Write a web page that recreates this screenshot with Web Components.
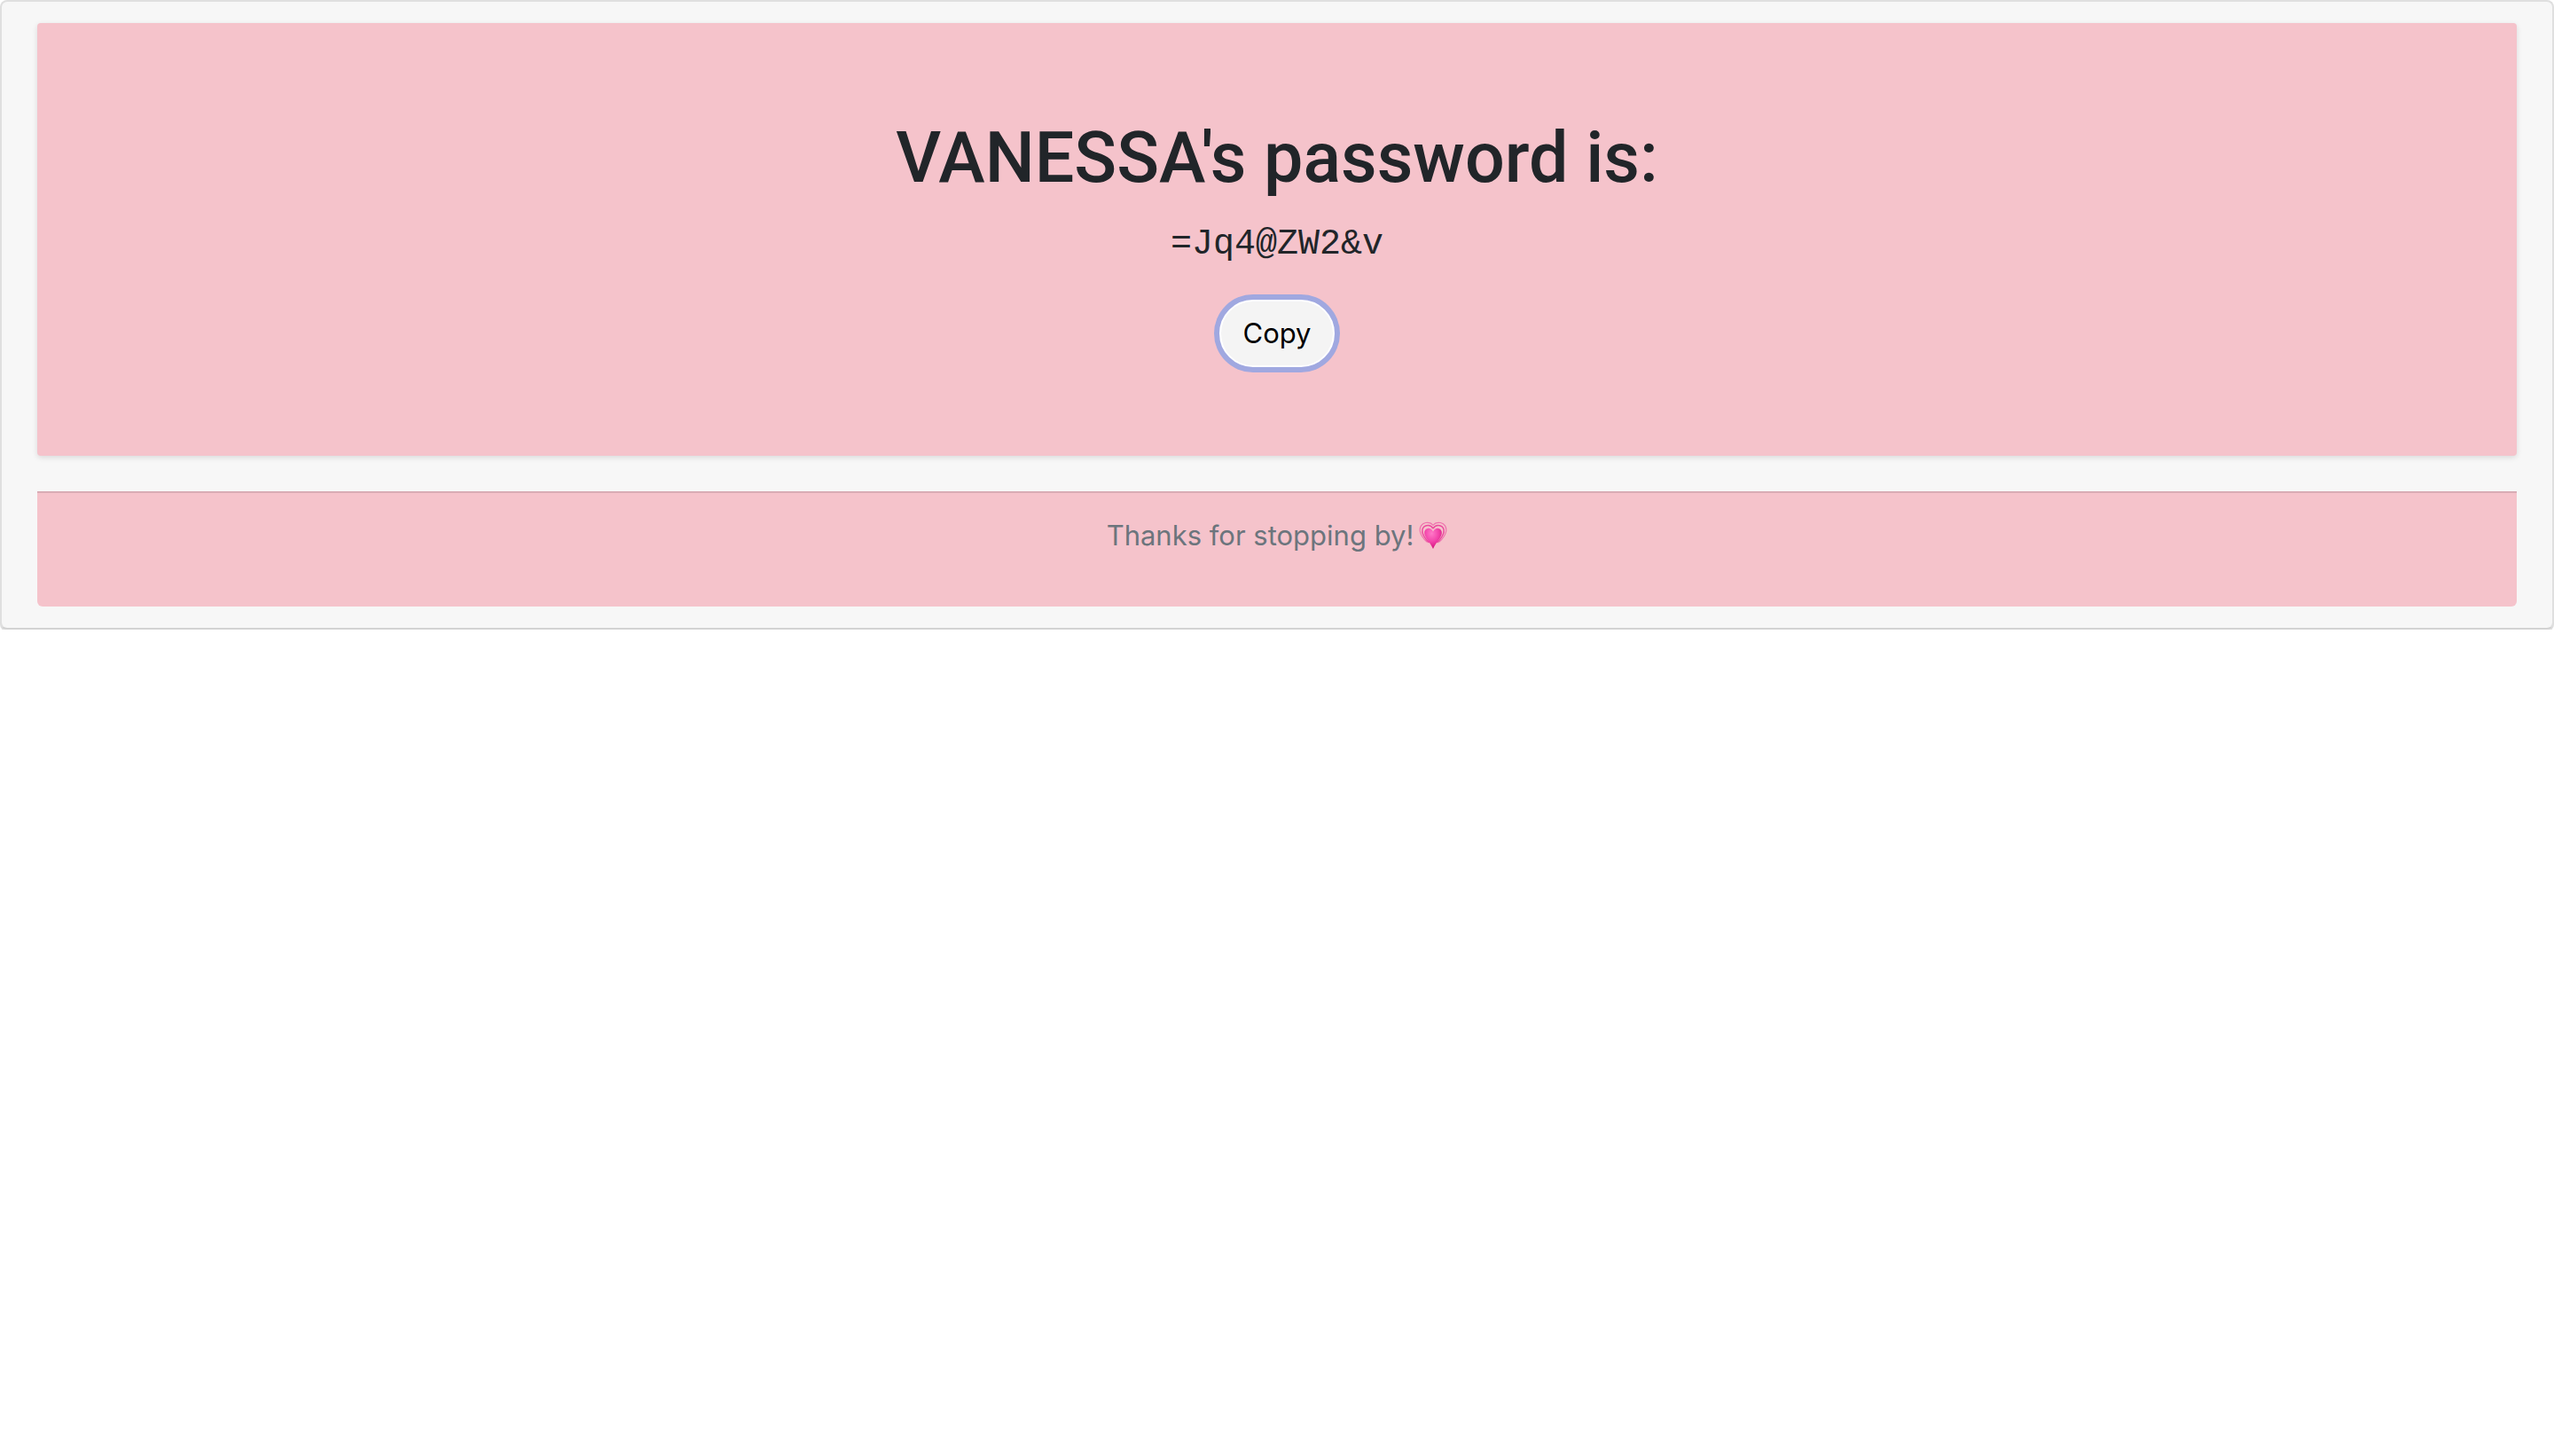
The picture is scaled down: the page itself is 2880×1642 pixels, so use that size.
<!DOCTYPE html>
<html lang="en">
<head>
<meta charset="utf-8">
<title>Password</title>
<style>
  body { margin: 0; background: #fff; color: #212529; font-family: Inter, "Liberation Sans", sans-serif; font-size: 31px; line-height: 48px; }
</style>
</head>
<body>
<page-card>
  <password-panel owner="VANESSA">=Jq4@ZW2&amp;v</password-panel>
  <thanks-footer>Thanks for stopping by!</thanks-footer>
</page-card>
<script>
class PageCard extends HTMLElement {
  constructor() {
    super();
    this.attachShadow({ mode: "open" }).innerHTML = `
      <style>
        :host { display: flex; flex-direction: column; gap: 40px; padding: 24px 40px; background: #f7f7f7;
          border: 2px solid #dfdfdf; border-bottom-color: #d3d3d3; border-radius: 8px; box-shadow: 0 2px 0 #dedede; }
      </style>
      <slot></slot>`;
  }
}
class PasswordPanel extends HTMLElement {
  constructor() {
    super();
    this.attachShadow({ mode: "open" }).innerHTML = `
      <style>
        :host { display: flex; flex-direction: column; align-items: center; padding: 104px 40px 100px;
          background: #f5c3cb; border-radius: 4px; box-shadow: 0 2px 6px rgba(0,0,0,.12); }
        h1 { margin: 0 0 20px; font-family: Roboto, sans-serif; font-size: 79px; font-weight: 500; line-height: 96px; }
        code { font-family: "Liberation Mono", monospace; font-size: 40px; line-height: 60px; }
        button { margin: 32px 0 0; padding: 12px 24px; font: inherit; line-height: 48px; color: #000; background: #f4f4f4;
          border: 2px solid #fff; border-radius: 40px; box-shadow: 0 0 0 6px #a0a8e0; outline: 0; cursor: pointer; }
      </style>
      <h1></h1>
      <code><slot></slot></code>
      <button type="button">Copy</button>`;
  }
  connectedCallback() {
    this.shadowRoot.querySelector("h1").textContent = this.getAttribute("owner") + "'s password is:";
    this.shadowRoot.querySelector("button").addEventListener("click", () => {
      if (navigator.clipboard) navigator.clipboard.writeText(this.textContent);
    });
  }
}
class PulsingHeart extends HTMLElement {
  constructor() {
    super();
    this.attachShadow({ mode: "open" }).innerHTML = `
      <style>:host { display: block; } svg { display: block; width: 32px; height: 32px; }</style>
      <svg viewBox="0 0 32 32" role="img" aria-label="beating heart">
        <defs>
          <radialGradient id="g" cx=".42" cy=".25" r=".8">
            <stop offset="0" stop-color="#ff79c8"/><stop offset=".5" stop-color="#f344aa"/><stop offset="1" stop-color="#cd0b72"/>
          </radialGradient>
        </defs>
        <g fill="none" stroke="#ee72ae">
          <path stroke-width="1.2" d="M16 4.500C14 1.500 10.500 1 7.500 1.500C3 2.500 .7 6.500 1.300 11C2.200 17 6 20.500 9.500 23.500M16 4.500C18 1.500 21.500 1 24.500 1.500C29 2.500 31.300 6.500 30.700 11C29.800 17 26 20.500 22.500 23.500"/>
          <path stroke-width="1.600" stroke="#ea4b9e" d="M16 8C14.200 5 11.300 4 8.500 4.700C5 5.500 3.400 8.700 3.900 12C4.800 17.500 9 21 11.500 24M16 8C17.800 5 20.700 4 23.500 4.700C27 5.500 28.600 8.700 28.100 12C27.200 17.500 23 21 20.500 24"/>
        </g>
        <path fill="url(#g)" d="M16 11.500C14.500 8.500 12.300 7.300 9.800 7.900C7 8.600 5.800 11 6.200 13.700C7 19 12.500 23 16 31C19.500 23 25 19 25.800 13.700C26.200 11 25 8.600 22.200 7.900C19.700 7.300 17.500 8.500 16 11.500Z"/>
      </svg>`;
  }
}
class ThanksFooter extends HTMLElement {
  constructor() {
    super();
    this.attachShadow({ mode: "open" }).innerHTML = `
      <style>
        :host { display: block; padding: 24px 40px 56px; background: #f5c3cb; border-top: 2px solid #d9acb5;
          border-radius: 0 0 6px 6px; color: #6c757d; }
        p { display: flex; justify-content: center; align-items: center; gap: 6px; margin: 0; line-height: 48px; }
      </style>
      <p><span><slot></slot></span><pulsing-heart></pulsing-heart></p>`;
  }
}
customElements.define("page-card", PageCard);
customElements.define("password-panel", PasswordPanel);
customElements.define("pulsing-heart", PulsingHeart);
customElements.define("thanks-footer", ThanksFooter);
</script>
</body>
</html>
